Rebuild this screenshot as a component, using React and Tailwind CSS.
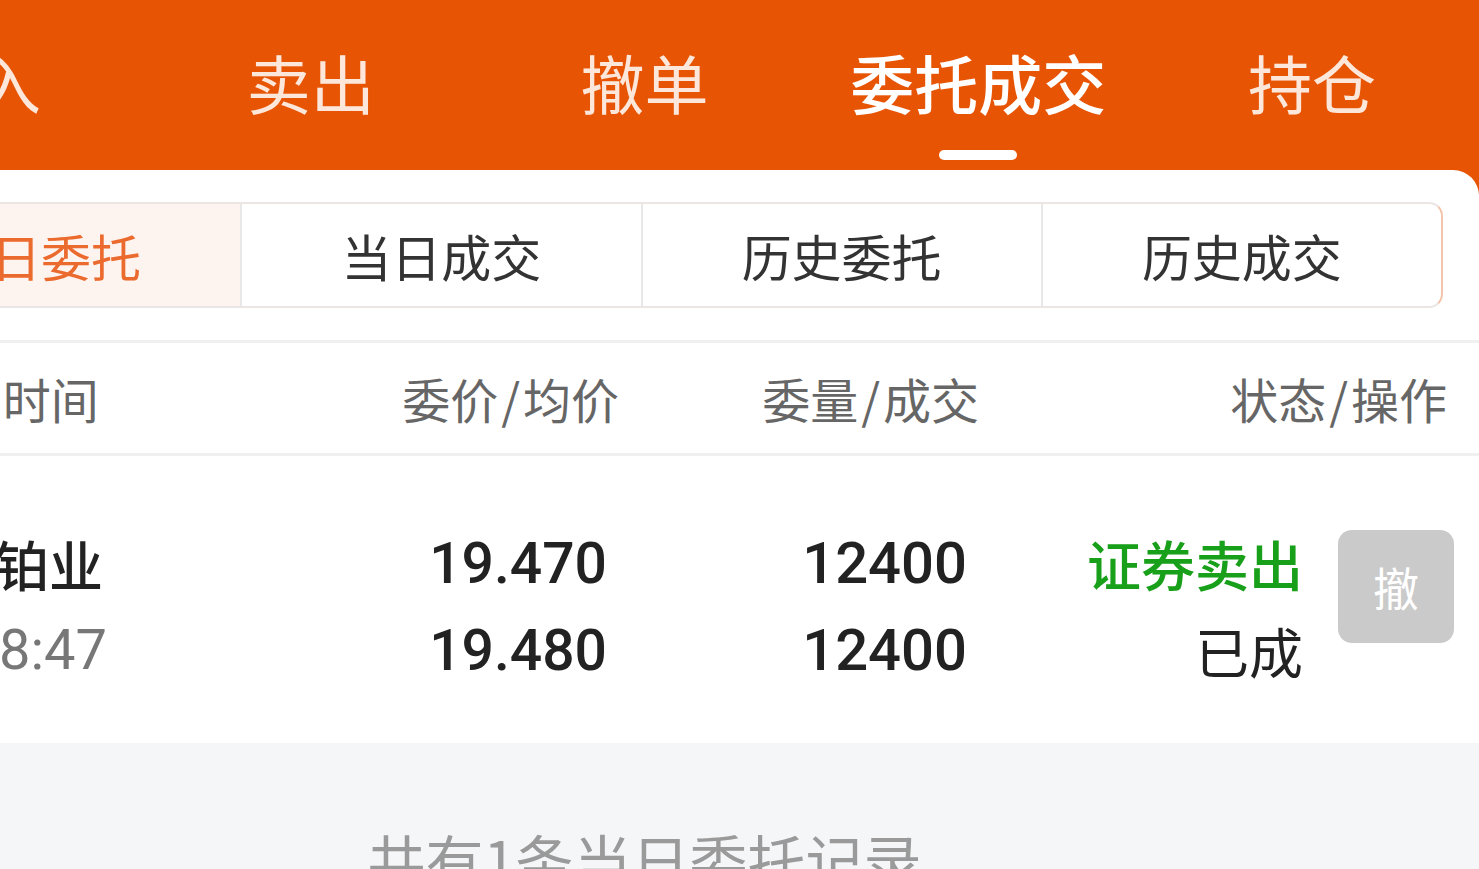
import React from 'react';

const TABS = ['买入', '卖出', '撤单', '委托成交', '持仓'];
const SUB_TABS = ['当日委托', '当日成交', '历史委托', '历史成交'];
const HEADERS = [
  { a: '名称', b: '时间', cls: 'w-[437px]' },
  { a: '委价', b: '均价', cls: 'w-[300px] text-right' },
  { a: '委量', b: '成交', cls: 'w-[360px] text-right' },
  { a: '状态', b: '操作', cls: 'w-[468px] text-right' },
];

const CJK = "font-['Noto_Sans_CJK_SC',sans-serif]";
const NUM = "font-['Roboto','Noto_Sans_CJK_SC',sans-serif]";

export default function App() {
  const active = 3;
  const activeSub = 0;

  return (
    <div className={`w-[1479px] h-[869px] overflow-hidden bg-[#f5f6f8] ${CJK}`}>
      <div className="ml-[-190px] w-[1669px]">
        {/* 顶部橙色标签栏 */}
        <div className="bg-[#e65404] h-[194px]">
          <div className="flex h-[170px]">
            {TABS.map((t, i) => (
              <div key={t} className="flex-1 flex flex-col items-center pt-[44px]">
                <span
                  className={`text-[64px] leading-[74px] ${
                    i === active ? 'text-white font-medium' : 'text-[#fde7da]'
                  }`}
                >
                  {t}
                </span>
                {i === active && <div className="mt-[32px] w-[78px] h-[10px] rounded-full bg-white" />}
              </div>
            ))}
          </div>
        </div>

        {/* 白色内容卡片 */}
        <div className="-mt-[24px] bg-white rounded-t-[26px]">
          <div className="pl-[30px] pr-[36px] pt-[32px] pb-[32px]">
            <div className="flex h-[106px] rounded-[14px] border-2 border-[#ebe6e3] border-r-[#f3c4aa] overflow-hidden">
              {SUB_TABS.map((t, i) => (
                <div
                  key={t}
                  className={`flex-1 flex items-center justify-center text-[50px] ${
                    i === activeSub
                      ? 'bg-[#fef4ef] text-[#eb6a2e] border-2 border-[#f2a27c] -m-[2px]'
                      : 'text-[#333] border-l-2 border-[#e8e8e8]'
                  } ${i === 1 ? 'border-l-0' : ''}`}
                >
                  {t}
                </div>
              ))}
            </div>
          </div>

          {/* 表头 */}
          <div className="flex items-center h-[116px] border-y-[3px] border-[#f0f0f0] pl-[72px] text-[48px] text-[#666]">
            {HEADERS.map(({ a, b, cls }) => (
              <div key={a} className={cls}>
                {a}
                <span className="mx-[3px]">/</span>
                {b}
              </div>
            ))}
          </div>

          {/* 数据行 */}
          <div className="flex items-start h-[287px] pt-[64px] pl-[77px] text-[54px] leading-[87px]">
            <div className="w-[420px]">
              <div className="text-[#222] font-medium">贵研铂业</div>
              <div className={`pl-[4px] text-[#777] text-[56px] ${NUM}`}>10:08:47</div>
            </div>
            <div className={`w-[300px] text-right text-[#222] text-[57px] font-medium ${NUM}`}>
              <div>19.470</div>
              <div>19.480</div>
            </div>
            <div className={`w-[360px] text-right text-[#222] text-[58px] font-medium ${NUM}`}>
              <div>12400</div>
              <div>12400</div>
            </div>
            <div className="w-[336px] text-right">
              <div className="text-[#18a01a] font-medium">证券卖出</div>
              <div className="text-[#222]">已成</div>
            </div>
            <button className="ml-[35px] mt-[10px] w-[116px] h-[113px] rounded-[14px] bg-[#cacaca] text-white text-[46px] flex items-center justify-center">
              撤
            </button>
          </div>
        </div>

        {/* 底部记录数 */}
        <div className="pt-[84px] text-center text-[58px] leading-[64px] text-[#9a9a9a]">
          共有1条当日委托记录
        </div>
      </div>
    </div>
  );
}
